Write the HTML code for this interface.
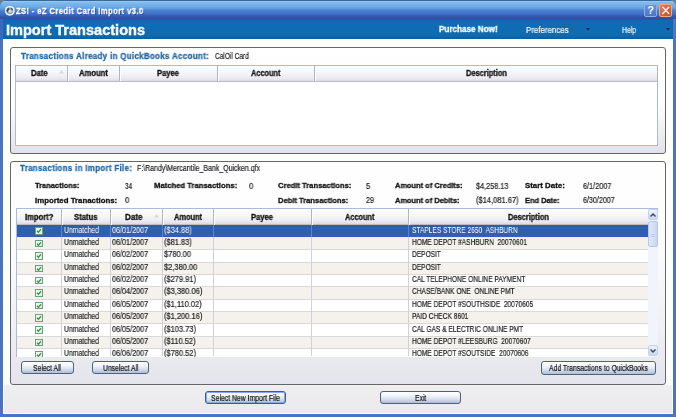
<!DOCTYPE html>
<html><head><meta charset="utf-8">
<style>
html,body{margin:0;padding:0;}
body{width:676px;height:417px;overflow:hidden;position:relative;background:linear-gradient(to bottom,#6a7e96 0,#6a7e96 8px,#4c74be 10px);font-family:"Liberation Sans",sans-serif;}
.a{position:absolute;box-sizing:border-box;}
.t{position:absolute;white-space:pre;line-height:1;transform-origin:0 0;font-family:"Liberation Sans",sans-serif;will-change:transform;-webkit-text-stroke:0.2px currentColor;}
.b{-webkit-text-stroke:0.3px currentColor;}
.titlebar{left:0;top:0;width:676px;height:19px;border-radius:7px 7px 0 0;background:linear-gradient(to bottom,#3c6898 0px,#3c6898 0.8px,#94caf6 1.2px,#80bbee 2.5px,#6ca9e6 7px,#5e9adc 9px,#4c84d2 10px,#3e70c4 14px,#3656b0 16.5px,#2f4ea8 18.4px,#1a58ac 19px);}
.band{left:0;top:18.5px;width:676px;height:20.5px;background:linear-gradient(to bottom,#0a62ae 0,#0e6cb4 2px,#0e6cb4 16px,#0b64aa 18.5px,#0a5a98 20.5px);}
.win{left:2.9px;top:39px;width:670.3px;height:374.8px;background:linear-gradient(to bottom,#fffffb 0px,#fdfdfc 345px,#eeedf0 347px,#ebeaed 100%);border-left:1px solid #fff;border-right:1px solid #fff;border-bottom:1px solid #fff;}
.gb{border:1px solid #666;border-radius:3px;}
.grid{border:1px solid #a9bcd9;background:#fff;overflow:hidden;}
.hdr{background:linear-gradient(to bottom,#ffffff 0%,#f8f7fb 40%,#ecebf3 80%,#dcdae4 100%);border-bottom:1px solid #bcbcc6;}
.sep{position:absolute;width:1px;background:#b4b4bc;box-shadow:1px 0 0 #fff;}
.vl{position:absolute;width:1px;background:#d2d2d6;}
.btn{border:1px solid #52607c;border-radius:3px;background:linear-gradient(to bottom,#ffffff 0%,#f4f6fa 30%,#d8e0ee 65%,#aebcd6 100%);}
.chk{position:absolute;width:8px;height:7.6px;box-sizing:border-box;border:1px solid #6e9c80;background:linear-gradient(135deg,#f8fdf8,#dcefdc);}
</style></head><body>
<div class="a titlebar"></div>
<div class="a band"></div>
<div class="a win"></div>
<svg class="a" style="left:3.5px;top:4.8px" width="12" height="12" viewBox="0 0 12 12"><circle cx="5.8" cy="5.8" r="4.9" fill="#f2f8fc"/><circle cx="5.8" cy="5.8" r="3.4" fill="#8a97a4"/><path d="M2.6 5.2 Q3.2 3 4.8 2.6 L5 5.5 Q4.2 7.8 2.9 7.2 Z" fill="#3c4a56"/><path d="M6.8 2.6 Q8.6 3.2 9 5 L7.6 5.2 Z" fill="#44525e"/><circle cx="6.1" cy="6.3" r="1.7" fill="#d8d6e4"/></svg>
<div class="a" style="left:644px;top:4.1px;width:12.5px;height:12.8px;border:1px solid #8fb0e0;border-radius:2px;background:linear-gradient(to bottom,#6a92d4,#4a76c4);"></div>
<div class="a" style="left:644.5px;top:4px;width:12px;height:13px;color:#f4f8ff;font:bold 11px 'Liberation Sans',sans-serif;line-height:13px;text-align:center;">?</div>
<div class="a" style="left:658.5px;top:4.1px;width:13.5px;height:12.8px;border:1px solid #e8a890;border-radius:2px;background:linear-gradient(135deg,#e0805c,#c84a26);"></div>
<svg class="a" style="left:658.5px;top:4.1px" width="13.5" height="12.8" viewBox="0 0 13.5 12.8"><path d="M3.8 3.2 L9.8 9.6 M9.8 3.2 L3.8 9.6" stroke="#fff2ea" stroke-width="1.5" stroke-linecap="round"/></svg>
<div class="a" style="left:673.2px;top:18.5px;width:2.8px;height:21px;background:#4a78c4;"></div>
<div class="a" style="left:0;top:18.5px;width:2.6px;height:21px;background:#3a68bc;"></div>
<svg class="a" style="left:585.5px;top:28.3px" width="4" height="3"><path d="M0 0 H4 L2 2.5 Z" fill="#0a2050"/></svg>
<svg class="a" style="left:666px;top:28.3px" width="4" height="3"><path d="M0 0 H4 L2 2.5 Z" fill="#0a2050"/></svg>
<div class="a gb" style="left:10px;top:47px;width:656.2px;height:106.80000000000001px;background:linear-gradient(to bottom,#ffffff 0%,#fdfdfd 55%,#ececef 85%,#e2e2e6 100%);"></div>
<div class="a gb" style="left:10px;top:160.9px;width:656.2px;height:223.9px;background:linear-gradient(to bottom,#ffffff 0%,#fbfbfc 40%,#eff0f3 75%,#e4e5ec 100%);"></div>
<div class="a grid" style="left:15px;top:65px;width:643.3px;height:80.80000000000001px;"></div>
<div class="a hdr" style="left:16px;top:66px;width:641.5px;height:15.5px;"></div>
<div class="sep" style="left:66.8px;top:66px;height:15px;"></div>
<div class="sep" style="left:119.0px;top:66px;height:15px;"></div>
<div class="sep" style="left:216.5px;top:66px;height:15px;"></div>
<div class="sep" style="left:314.3px;top:66px;height:15px;"></div>
<div class="sep" style="left:657.0px;top:66px;height:15px;"></div>
<svg class="a" style="left:59px;top:70px" width="5" height="4"><path d="M0 3.5 L2.5 0 L5 3.5 Z" fill="#d8d8dc"/></svg>
<div class="a grid" style="left:15.5px;top:207.9px;width:642.8px;height:149.1px;"></div>
<div class="a hdr" style="left:16.5px;top:208.9px;width:631.0px;height:16.099999999999994px;"></div>
<div class="sep" style="left:61.0px;top:208.9px;height:16px;"></div>
<div class="sep" style="left:110.0px;top:208.9px;height:16px;"></div>
<div class="sep" style="left:161.5px;top:208.9px;height:16px;"></div>
<div class="sep" style="left:213.0px;top:208.9px;height:16px;"></div>
<div class="sep" style="left:310.5px;top:208.9px;height:16px;"></div>
<div class="sep" style="left:408.2px;top:208.9px;height:16px;"></div>
<svg class="a" style="left:153.5px;top:214px" width="5" height="4"><path d="M0 3.5 L2.5 0 L5 3.5 Z" fill="#d8d8dc"/></svg>
<div class="a" style="left:16.5px;top:225px;width:631px;height:131.5px;overflow:hidden;">
<div class="a" style="left:0;top:0.00px;width:631px;height:12.47px;background:linear-gradient(to bottom,#3a5a8e 0,#2c62ae 25%,#2f5eac 60%,#3460b2 100%);"></div>
<div class="a" style="left:0;top:12.37px;width:631px;height:12.47px;background:#f5f2ed;"></div>
<div class="a" style="left:0;top:24.74px;width:631px;height:12.47px;background:#ffffff;"></div>
<div class="a" style="left:0;top:37.11px;width:631px;height:12.47px;background:#f5f2ed;"></div>
<div class="a" style="left:0;top:49.48px;width:631px;height:12.47px;background:#ffffff;"></div>
<div class="a" style="left:0;top:61.85px;width:631px;height:12.47px;background:#f5f2ed;"></div>
<div class="a" style="left:0;top:74.22px;width:631px;height:12.47px;background:#ffffff;"></div>
<div class="a" style="left:0;top:86.59px;width:631px;height:12.47px;background:#f5f2ed;"></div>
<div class="a" style="left:0;top:98.96px;width:631px;height:12.47px;background:#ffffff;"></div>
<div class="a" style="left:0;top:111.33px;width:631px;height:12.47px;background:#f5f2ed;"></div>
<div class="a" style="left:0;top:123.70px;width:631px;height:12.47px;background:#ffffff;"></div>
<div class="a" style="left:0;top:11.77px;width:631px;height:1px;background:#e6ecf6;"></div>
<div class="a" style="left:0;top:24.14px;width:631px;height:1px;background:#d9d9d9;"></div>
<div class="a" style="left:0;top:36.51px;width:631px;height:1px;background:#d9d9d9;"></div>
<div class="a" style="left:0;top:48.88px;width:631px;height:1px;background:#d9d9d9;"></div>
<div class="a" style="left:0;top:61.25px;width:631px;height:1px;background:#d9d9d9;"></div>
<div class="a" style="left:0;top:73.62px;width:631px;height:1px;background:#d9d9d9;"></div>
<div class="a" style="left:0;top:85.99px;width:631px;height:1px;background:#d9d9d9;"></div>
<div class="a" style="left:0;top:98.36px;width:631px;height:1px;background:#d9d9d9;"></div>
<div class="a" style="left:0;top:110.73px;width:631px;height:1px;background:#d9d9d9;"></div>
<div class="a" style="left:0;top:123.10px;width:631px;height:1px;background:#d9d9d9;"></div>
<div class="a" style="left:0;top:135.47px;width:631px;height:1px;background:#d9d9d9;"></div>
<div class="vl" style="left:44.5px;top:12.4px;height:119px;"></div>
<div class="vl" style="left:93.5px;top:12.4px;height:119px;"></div>
<div class="vl" style="left:145.0px;top:12.4px;height:119px;"></div>
<div class="vl" style="left:196.5px;top:12.4px;height:119px;"></div>
<div class="vl" style="left:294.0px;top:12.4px;height:119px;"></div>
<div class="vl" style="left:391.7px;top:12.4px;height:119px;"></div>
<div class="vl" style="left:44.5px;top:0;height:12.37px;background:#5a84cc;"></div>
<div class="vl" style="left:93.5px;top:0;height:12.37px;background:#5a84cc;"></div>
<div class="vl" style="left:145.0px;top:0;height:12.37px;background:#5a84cc;"></div>
<div class="vl" style="left:196.5px;top:0;height:12.37px;background:#5a84cc;"></div>
<div class="vl" style="left:294.0px;top:0;height:12.37px;background:#5a84cc;"></div>
<div class="vl" style="left:391.7px;top:0;height:12.37px;background:#5a84cc;"></div>
<div class="chk" style="left:18.4px;top:2.40px;"></div>
<svg class="a" style="left:18.4px;top:2.40px" width="8" height="7.6" viewBox="0 0 8 7.6"><path d="M2 3.8 L3.4 5.2 L6 2.3" stroke="#35954a" stroke-width="1.3" fill="none"/></svg>
<div class="chk" style="left:18.4px;top:14.77px;"></div>
<svg class="a" style="left:18.4px;top:14.77px" width="8" height="7.6" viewBox="0 0 8 7.6"><path d="M2 3.8 L3.4 5.2 L6 2.3" stroke="#35954a" stroke-width="1.3" fill="none"/></svg>
<div class="chk" style="left:18.4px;top:27.14px;"></div>
<svg class="a" style="left:18.4px;top:27.14px" width="8" height="7.6" viewBox="0 0 8 7.6"><path d="M2 3.8 L3.4 5.2 L6 2.3" stroke="#35954a" stroke-width="1.3" fill="none"/></svg>
<div class="chk" style="left:18.4px;top:39.51px;"></div>
<svg class="a" style="left:18.4px;top:39.51px" width="8" height="7.6" viewBox="0 0 8 7.6"><path d="M2 3.8 L3.4 5.2 L6 2.3" stroke="#35954a" stroke-width="1.3" fill="none"/></svg>
<div class="chk" style="left:18.4px;top:51.88px;"></div>
<svg class="a" style="left:18.4px;top:51.88px" width="8" height="7.6" viewBox="0 0 8 7.6"><path d="M2 3.8 L3.4 5.2 L6 2.3" stroke="#35954a" stroke-width="1.3" fill="none"/></svg>
<div class="chk" style="left:18.4px;top:64.25px;"></div>
<svg class="a" style="left:18.4px;top:64.25px" width="8" height="7.6" viewBox="0 0 8 7.6"><path d="M2 3.8 L3.4 5.2 L6 2.3" stroke="#35954a" stroke-width="1.3" fill="none"/></svg>
<div class="chk" style="left:18.4px;top:76.62px;"></div>
<svg class="a" style="left:18.4px;top:76.62px" width="8" height="7.6" viewBox="0 0 8 7.6"><path d="M2 3.8 L3.4 5.2 L6 2.3" stroke="#35954a" stroke-width="1.3" fill="none"/></svg>
<div class="chk" style="left:18.4px;top:88.99px;"></div>
<svg class="a" style="left:18.4px;top:88.99px" width="8" height="7.6" viewBox="0 0 8 7.6"><path d="M2 3.8 L3.4 5.2 L6 2.3" stroke="#35954a" stroke-width="1.3" fill="none"/></svg>
<div class="chk" style="left:18.4px;top:101.36px;"></div>
<svg class="a" style="left:18.4px;top:101.36px" width="8" height="7.6" viewBox="0 0 8 7.6"><path d="M2 3.8 L3.4 5.2 L6 2.3" stroke="#35954a" stroke-width="1.3" fill="none"/></svg>
<div class="chk" style="left:18.4px;top:113.73px;"></div>
<svg class="a" style="left:18.4px;top:113.73px" width="8" height="7.6" viewBox="0 0 8 7.6"><path d="M2 3.8 L3.4 5.2 L6 2.3" stroke="#35954a" stroke-width="1.3" fill="none"/></svg>
<div class="chk" style="left:18.4px;top:126.10px;"></div>
<svg class="a" style="left:18.4px;top:126.10px" width="8" height="7.6" viewBox="0 0 8 7.6"><path d="M2 3.8 L3.4 5.2 L6 2.3" stroke="#35954a" stroke-width="1.3" fill="none"/></svg>
</div>
<div class="a" style="left:647.5px;top:209.5px;width:10.5px;height:147px;background:#f1f4fa;"></div>
<div class="a" style="left:647.6px;top:209.4px;width:10.3px;height:10.8px;border:1px solid #c5d3ea;border-radius:2px;background:linear-gradient(to bottom,#eef3fc,#c9d8f0);"></div>
<svg class="a" style="left:648px;top:211.5px" width="10" height="6"><path d="M2.5 4.5 L5 2 L7.5 4.5" stroke="#3d4a66" stroke-width="1.5" fill="none"/></svg>
<div class="a" style="left:647.6px;top:221px;width:10.3px;height:26.3px;border:1px solid #b8c8e4;border-radius:2px;background:linear-gradient(to right,#dfe8f7,#c8d7f0);"></div>
<div class="a" style="left:650.5px;top:232.5px;width:4.5px;height:5px;background:repeating-linear-gradient(to bottom,#dde7f7 0,#dde7f7 1px,#b4c4e2 1px,#b4c4e2 2px);"></div>
<div class="a" style="left:647.6px;top:345px;width:10.3px;height:10.8px;border:1px solid #c5d3ea;border-radius:2px;background:linear-gradient(to bottom,#eef3fc,#c9d8f0);"></div>
<svg class="a" style="left:648px;top:347.5px" width="10" height="6"><path d="M2.5 1.5 L5 4 L7.5 1.5" stroke="#3d4a66" stroke-width="1.5" fill="none"/></svg>
<div class="a btn" style="left:20.8px;top:360.9px;width:53.10000000000001px;height:13.5px;"></div>
<div class="a btn" style="left:92.1px;top:360.9px;width:56.80000000000001px;height:13.5px;"></div>
<div class="a btn" style="left:541.2px;top:361.1px;width:114.59999999999991px;height:13.5px;"></div>
<div class="a btn" style="left:205.1px;top:391.1px;width:81.00000000000003px;height:13.299999999999955px;border-color:#3c5a9a;box-shadow:inset 0 0 0 1px #8aa8e8;"></div>
<div class="a btn" style="left:380.1px;top:391.1px;width:81.39999999999998px;height:13.299999999999955px;"></div>
<span class="t b" style="left:16.10px;top:7.21px;font-size:9.2px;font-weight:700;color:#ffffff;letter-spacing:0.5px;transform:scaleX(0.8322);text-shadow:1px 1px 0 rgba(10,30,90,0.45);">ZSI - eZ Credit Card Import v3.0</span>
<span class="t b" style="left:5.90px;top:23.28px;font-size:14.2px;font-weight:700;color:#f4fbff;letter-spacing:0px;transform:scaleX(1.0250);-webkit-text-stroke:0.4px #f4fbff;">Import Transactions</span>
<span class="t b" style="left:439.20px;top:25.18px;font-size:9px;font-weight:700;color:#ffffff;letter-spacing:0px;transform:scaleX(0.9026);">Purchase Now!</span>
<span class="t" style="left:525.80px;top:25.50px;font-size:8.5px;font-weight:400;color:#eef6ff;letter-spacing:0px;transform:scaleX(0.9314);">Preferences</span>
<span class="t" style="left:621.60px;top:25.50px;font-size:8.5px;font-weight:400;color:#eef6ff;letter-spacing:0px;transform:scaleX(0.8007);">Help</span>
<span class="t b" style="left:21.20px;top:52.56px;font-size:8.2px;font-weight:700;color:#2368a8;letter-spacing:0.35px;transform:scaleX(0.9660);">Transactions Already in QuickBooks Account:</span>
<span class="t" style="left:215.00px;top:52.00px;font-size:8.5px;font-weight:400;color:#1e1e1e;letter-spacing:0px;transform:scaleX(0.7670);">CalOil Card</span>
<span class="t b" style="left:30.55px;top:70.16px;font-size:8.2px;font-weight:700;color:#111;letter-spacing:0px;transform:scaleX(0.9352);">Date</span>
<span class="t b" style="left:79.00px;top:70.16px;font-size:8.2px;font-weight:700;color:#111;letter-spacing:0px;transform:scaleX(0.9309);">Amount</span>
<span class="t b" style="left:157.25px;top:70.16px;font-size:8.2px;font-weight:700;color:#111;letter-spacing:0px;transform:scaleX(0.9288);">Payee</span>
<span class="t b" style="left:251.20px;top:70.16px;font-size:8.2px;font-weight:700;color:#111;letter-spacing:0px;transform:scaleX(0.8977);">Account</span>
<span class="t b" style="left:465.90px;top:70.16px;font-size:8.2px;font-weight:700;color:#111;letter-spacing:0px;transform:scaleX(0.9102);">Description</span>
<span class="t b" style="left:19.60px;top:164.86px;font-size:8.2px;font-weight:700;color:#2368a8;letter-spacing:0.35px;transform:scaleX(0.9613);">Transactions in Import File:</span>
<span class="t" style="left:136.60px;top:163.80px;font-size:8.5px;font-weight:400;color:#1e1e1e;letter-spacing:0px;transform:scaleX(0.8212);">F:\Randy\Mercantile_Bank_Quicken.qfx</span>
<span class="t b" style="left:34.80px;top:182.10px;font-size:7.8px;font-weight:700;color:#111;letter-spacing:0px;transform:scaleX(0.9577);">Tranactions:</span>
<span class="t" style="left:125.40px;top:182.00px;font-size:8.5px;font-weight:400;color:#1e1e1e;letter-spacing:0px;transform:scaleX(0.7498);">34</span>
<span class="t b" style="left:34.80px;top:196.50px;font-size:7.8px;font-weight:700;color:#111;letter-spacing:0px;transform:scaleX(1.0038);">Imported Tranactions:</span>
<span class="t" style="left:125.40px;top:196.40px;font-size:8.5px;font-weight:400;color:#1e1e1e;letter-spacing:0px;transform:scaleX(0.9000);">0</span>
<span class="t b" style="left:154.20px;top:182.10px;font-size:7.8px;font-weight:700;color:#111;letter-spacing:0px;transform:scaleX(0.9846);">Matched Transactions:</span>
<span class="t" style="left:248.90px;top:182.00px;font-size:8.5px;font-weight:400;color:#1e1e1e;letter-spacing:0px;transform:scaleX(0.9000);">0</span>
<span class="t b" style="left:278.00px;top:182.10px;font-size:7.8px;font-weight:700;color:#111;letter-spacing:0px;transform:scaleX(0.9723);">Credit Transactions:</span>
<span class="t" style="left:365.90px;top:182.00px;font-size:8.5px;font-weight:400;color:#1e1e1e;letter-spacing:0px;transform:scaleX(0.9000);">5</span>
<span class="t b" style="left:278.00px;top:196.50px;font-size:7.8px;font-weight:700;color:#111;letter-spacing:0px;transform:scaleX(0.9702);">Debit Transactions:</span>
<span class="t" style="left:365.90px;top:196.40px;font-size:8.5px;font-weight:400;color:#1e1e1e;letter-spacing:0px;transform:scaleX(0.8449);">29</span>
<span class="t b" style="left:395.30px;top:182.10px;font-size:7.8px;font-weight:700;color:#111;letter-spacing:0px;transform:scaleX(0.9560);">Amount of Credits:</span>
<span class="t" style="left:475.90px;top:182.00px;font-size:8.5px;font-weight:400;color:#1e1e1e;letter-spacing:0px;transform:scaleX(0.8565);">$4,258.13</span>
<span class="t b" style="left:395.30px;top:196.50px;font-size:7.8px;font-weight:700;color:#111;letter-spacing:0px;transform:scaleX(0.9545);">Amount of Debits:</span>
<span class="t" style="left:475.90px;top:196.40px;font-size:8.5px;font-weight:400;color:#1e1e1e;letter-spacing:0px;transform:scaleX(0.8838);">($14,081.67)</span>
<span class="t b" style="left:524.90px;top:182.10px;font-size:7.8px;font-weight:700;color:#111;letter-spacing:0px;transform:scaleX(1.0092);">Start Date:</span>
<span class="t" style="left:583.10px;top:182.00px;font-size:8.5px;font-weight:400;color:#1e1e1e;letter-spacing:0px;transform:scaleX(0.8582);">6/1/2007</span>
<span class="t b" style="left:524.90px;top:196.50px;font-size:7.8px;font-weight:700;color:#111;letter-spacing:0px;transform:scaleX(0.9508);">End Date:</span>
<span class="t" style="left:583.10px;top:196.40px;font-size:8.5px;font-weight:400;color:#1e1e1e;letter-spacing:0px;transform:scaleX(0.8406);">6/30/2007</span>
<span class="t b" style="left:24.75px;top:213.96px;font-size:8.2px;font-weight:700;color:#111;letter-spacing:0px;transform:scaleX(0.9316);">Import?</span>
<span class="t b" style="left:74.25px;top:213.96px;font-size:8.2px;font-weight:700;color:#111;letter-spacing:0px;transform:scaleX(0.9388);">Status</span>
<span class="t b" style="left:124.55px;top:213.96px;font-size:8.2px;font-weight:700;color:#111;letter-spacing:0px;transform:scaleX(0.9803);">Date</span>
<span class="t b" style="left:173.75px;top:213.96px;font-size:8.2px;font-weight:700;color:#111;letter-spacing:0px;transform:scaleX(0.9051);">Amount</span>
<span class="t b" style="left:251.25px;top:213.96px;font-size:8.2px;font-weight:700;color:#111;letter-spacing:0px;transform:scaleX(0.9288);">Payee</span>
<span class="t b" style="left:345.15px;top:213.96px;font-size:8.2px;font-weight:700;color:#111;letter-spacing:0px;transform:scaleX(0.8977);">Account</span>
<span class="t b" style="left:507.60px;top:213.96px;font-size:8.2px;font-weight:700;color:#111;letter-spacing:0px;transform:scaleX(0.9102);">Description</span>
<span class="t" style="left:64.00px;top:225.57px;font-size:8.5px;font-weight:400;color:#ffffff;letter-spacing:0px;transform:scaleX(0.8052);-webkit-text-stroke:0;">Unmatched</span>
<span class="t" style="left:111.60px;top:225.57px;font-size:8.5px;font-weight:400;color:#ffffff;letter-spacing:0px;transform:scaleX(0.8508);-webkit-text-stroke:0;">06/01/2007</span>
<span class="t" style="left:164.20px;top:225.57px;font-size:8.5px;font-weight:400;color:#ffffff;letter-spacing:0px;transform:scaleX(0.8800);-webkit-text-stroke:0;">($34.88)</span>
<span class="t" style="left:411.60px;top:225.57px;font-size:8.5px;font-weight:400;color:#ffffff;letter-spacing:0px;transform:scaleX(0.7760);-webkit-text-stroke:0;">STAPLES STORE 2650  ASHBURN</span>
<span class="t" style="left:64.00px;top:237.94px;font-size:8.5px;font-weight:400;color:#1e1e1e;letter-spacing:0px;transform:scaleX(0.8052);">Unmatched</span>
<span class="t" style="left:111.60px;top:237.94px;font-size:8.5px;font-weight:400;color:#1e1e1e;letter-spacing:0px;transform:scaleX(0.8508);">06/01/2007</span>
<span class="t" style="left:164.20px;top:237.94px;font-size:8.5px;font-weight:400;color:#1e1e1e;letter-spacing:0px;transform:scaleX(0.8800);">($81.83)</span>
<span class="t" style="left:411.60px;top:237.94px;font-size:8.5px;font-weight:400;color:#1e1e1e;letter-spacing:0px;transform:scaleX(0.7760);">HOME DEPOT #ASHBURN  20070601</span>
<span class="t" style="left:64.00px;top:250.31px;font-size:8.5px;font-weight:400;color:#1e1e1e;letter-spacing:0px;transform:scaleX(0.8052);">Unmatched</span>
<span class="t" style="left:111.60px;top:250.31px;font-size:8.5px;font-weight:400;color:#1e1e1e;letter-spacing:0px;transform:scaleX(0.8508);">06/02/2007</span>
<span class="t" style="left:164.20px;top:250.31px;font-size:8.5px;font-weight:400;color:#1e1e1e;letter-spacing:0px;transform:scaleX(0.8800);">$780.00</span>
<span class="t" style="left:411.60px;top:250.31px;font-size:8.5px;font-weight:400;color:#1e1e1e;letter-spacing:0px;transform:scaleX(0.7760);">DEPOSIT</span>
<span class="t" style="left:64.00px;top:262.68px;font-size:8.5px;font-weight:400;color:#1e1e1e;letter-spacing:0px;transform:scaleX(0.8052);">Unmatched</span>
<span class="t" style="left:111.60px;top:262.68px;font-size:8.5px;font-weight:400;color:#1e1e1e;letter-spacing:0px;transform:scaleX(0.8508);">06/02/2007</span>
<span class="t" style="left:164.20px;top:262.68px;font-size:8.5px;font-weight:400;color:#1e1e1e;letter-spacing:0px;transform:scaleX(0.8800);">$2,380.00</span>
<span class="t" style="left:411.60px;top:262.68px;font-size:8.5px;font-weight:400;color:#1e1e1e;letter-spacing:0px;transform:scaleX(0.7760);">DEPOSIT</span>
<span class="t" style="left:64.00px;top:275.05px;font-size:8.5px;font-weight:400;color:#1e1e1e;letter-spacing:0px;transform:scaleX(0.8052);">Unmatched</span>
<span class="t" style="left:111.60px;top:275.05px;font-size:8.5px;font-weight:400;color:#1e1e1e;letter-spacing:0px;transform:scaleX(0.8508);">06/02/2007</span>
<span class="t" style="left:164.20px;top:275.05px;font-size:8.5px;font-weight:400;color:#1e1e1e;letter-spacing:0px;transform:scaleX(0.8800);">($279.91)</span>
<span class="t" style="left:411.60px;top:275.05px;font-size:8.5px;font-weight:400;color:#1e1e1e;letter-spacing:0px;transform:scaleX(0.7760);">CAL TELEPHONE ONLINE PAYMENT</span>
<span class="t" style="left:64.00px;top:287.42px;font-size:8.5px;font-weight:400;color:#1e1e1e;letter-spacing:0px;transform:scaleX(0.8052);">Unmatched</span>
<span class="t" style="left:111.60px;top:287.42px;font-size:8.5px;font-weight:400;color:#1e1e1e;letter-spacing:0px;transform:scaleX(0.8508);">06/04/2007</span>
<span class="t" style="left:164.20px;top:287.42px;font-size:8.5px;font-weight:400;color:#1e1e1e;letter-spacing:0px;transform:scaleX(0.8800);">($3,380.06)</span>
<span class="t" style="left:411.60px;top:287.42px;font-size:8.5px;font-weight:400;color:#1e1e1e;letter-spacing:0px;transform:scaleX(0.7760);">CHASE/BANK ONE  ONLINE PMT</span>
<span class="t" style="left:64.00px;top:299.79px;font-size:8.5px;font-weight:400;color:#1e1e1e;letter-spacing:0px;transform:scaleX(0.8052);">Unmatched</span>
<span class="t" style="left:111.60px;top:299.79px;font-size:8.5px;font-weight:400;color:#1e1e1e;letter-spacing:0px;transform:scaleX(0.8508);">06/05/2007</span>
<span class="t" style="left:164.20px;top:299.79px;font-size:8.5px;font-weight:400;color:#1e1e1e;letter-spacing:0px;transform:scaleX(0.8800);">($1,110.02)</span>
<span class="t" style="left:411.60px;top:299.79px;font-size:8.5px;font-weight:400;color:#1e1e1e;letter-spacing:0px;transform:scaleX(0.7760);">HOME DEPOT #SOUTHSIDE  20070605</span>
<span class="t" style="left:64.00px;top:312.16px;font-size:8.5px;font-weight:400;color:#1e1e1e;letter-spacing:0px;transform:scaleX(0.8052);">Unmatched</span>
<span class="t" style="left:111.60px;top:312.16px;font-size:8.5px;font-weight:400;color:#1e1e1e;letter-spacing:0px;transform:scaleX(0.8508);">06/05/2007</span>
<span class="t" style="left:164.20px;top:312.16px;font-size:8.5px;font-weight:400;color:#1e1e1e;letter-spacing:0px;transform:scaleX(0.8800);">($1,200.16)</span>
<span class="t" style="left:411.60px;top:312.16px;font-size:8.5px;font-weight:400;color:#1e1e1e;letter-spacing:0px;transform:scaleX(0.7760);">PAID CHECK 8601</span>
<span class="t" style="left:64.00px;top:324.53px;font-size:8.5px;font-weight:400;color:#1e1e1e;letter-spacing:0px;transform:scaleX(0.8052);">Unmatched</span>
<span class="t" style="left:111.60px;top:324.53px;font-size:8.5px;font-weight:400;color:#1e1e1e;letter-spacing:0px;transform:scaleX(0.8508);">06/05/2007</span>
<span class="t" style="left:164.20px;top:324.53px;font-size:8.5px;font-weight:400;color:#1e1e1e;letter-spacing:0px;transform:scaleX(0.8800);">($103.73)</span>
<span class="t" style="left:411.60px;top:324.53px;font-size:8.5px;font-weight:400;color:#1e1e1e;letter-spacing:0px;transform:scaleX(0.7760);">CAL GAS &amp; ELECTRIC ONLINE PMT</span>
<span class="t" style="left:64.00px;top:336.90px;font-size:8.5px;font-weight:400;color:#1e1e1e;letter-spacing:0px;transform:scaleX(0.8052);">Unmatched</span>
<span class="t" style="left:111.60px;top:336.90px;font-size:8.5px;font-weight:400;color:#1e1e1e;letter-spacing:0px;transform:scaleX(0.8508);">06/05/2007</span>
<span class="t" style="left:164.20px;top:336.90px;font-size:8.5px;font-weight:400;color:#1e1e1e;letter-spacing:0px;transform:scaleX(0.8800);">($110.52)</span>
<span class="t" style="left:411.60px;top:336.90px;font-size:8.5px;font-weight:400;color:#1e1e1e;letter-spacing:0px;transform:scaleX(0.7760);">HOME DEPOT #LEESBURG  20070607</span>
<span class="t" style="left:64.00px;top:349.27px;font-size:8.5px;font-weight:400;color:#1e1e1e;letter-spacing:0px;transform:scaleX(0.8052);clip-path:inset(0 0 1.27px 0);">Unmatched</span>
<span class="t" style="left:111.60px;top:349.27px;font-size:8.5px;font-weight:400;color:#1e1e1e;letter-spacing:0px;transform:scaleX(0.8508);clip-path:inset(0 0 1.27px 0);">06/06/2007</span>
<span class="t" style="left:164.20px;top:349.27px;font-size:8.5px;font-weight:400;color:#1e1e1e;letter-spacing:0px;transform:scaleX(0.8800);clip-path:inset(0 0 1.27px 0);">($780.52)</span>
<span class="t" style="left:411.60px;top:349.27px;font-size:8.5px;font-weight:400;color:#1e1e1e;letter-spacing:0px;transform:scaleX(0.7760);clip-path:inset(0 0 1.27px 0);">HOME DEPOT #SOUTSIDE  20070606</span>
<span class="t" style="left:33.35px;top:363.80px;font-size:8.5px;font-weight:400;color:#111;letter-spacing:0px;transform:scaleX(0.8007);">Select All</span>
<span class="t" style="left:102.75px;top:363.80px;font-size:8.5px;font-weight:400;color:#111;letter-spacing:0px;transform:scaleX(0.7992);">Unselect All</span>
<span class="t" style="left:549.00px;top:364.00px;font-size:8.5px;font-weight:400;color:#111;letter-spacing:0px;transform:scaleX(0.8059);">Add Transactions to QuickBooks</span>
<span class="t" style="left:211.10px;top:393.90px;font-size:8.5px;font-weight:400;color:#111;letter-spacing:0px;transform:scaleX(0.8070);">Select New Import File</span>
<span class="t" style="left:415.15px;top:393.90px;font-size:8.5px;font-weight:400;color:#111;letter-spacing:0px;transform:scaleX(0.7974);">Exit</span>
</body></html>
